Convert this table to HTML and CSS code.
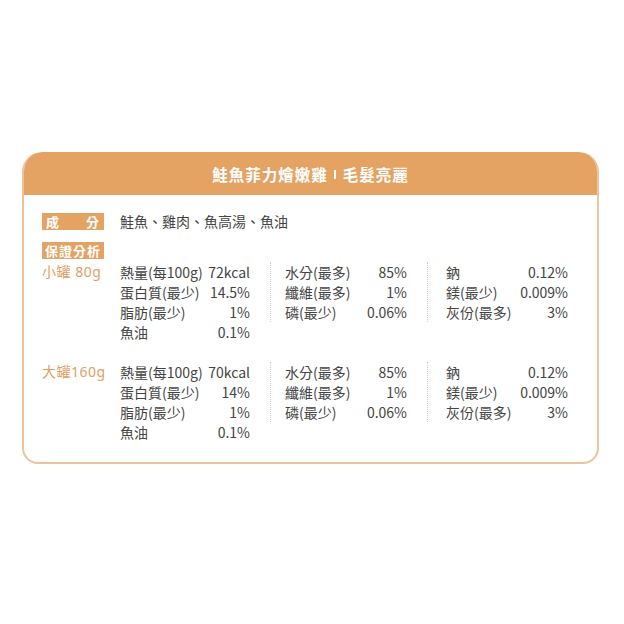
FILE: index.html
```html
<!DOCTYPE html>
<html lang="zh-Hant">
<head>
<meta charset="utf-8">
<link rel="stylesheet" href="styles.css">
</head>
<body>
<div class="card">
  <div class="head">鮭魚菲力燴嫩雞<span class="bar"></span>毛髮亮麗</div>
  <div class="body">
    <div class="row ingr">
      <span class="tag spread"><span>成</span><span>分</span></span>
      <span class="ingr-text">鮭魚、雞肉、魚高湯、魚油</span>
    </div>
    <div class="row"><span class="tag">保證分析</span></div>
    <div class="prod">
      <div class="pname">小罐 80g</div>
      <div class="col c1">
        <span>熱量(每100g)</span><span class="v">72kcal</span>
        <span>蛋白質(最少)</span><span class="v">14.5%</span>
        <span>脂肪(最少)</span><span class="v">1%</span>
        <span>魚油</span><span class="v">0.1%</span>
      </div>
      <div class="col c2">
        <span>水分(最多)</span><span class="v">85%</span>
        <span>纖維(最多)</span><span class="v">1%</span>
        <span>磷(最少)</span><span class="v">0.06%</span>
      </div>
      <div class="col c3">
        <span>鈉</span><span class="v">0.12%</span>
        <span>鎂(最少)</span><span class="v">0.009%</span>
        <span>灰份(最多)</span><span class="v">3%</span>
      </div>
    </div>
    <div class="prod second">
      <div class="pname">大罐160g</div>
      <div class="col c1">
        <span>熱量(每100g)</span><span class="v">70kcal</span>
        <span>蛋白質(最少)</span><span class="v">14%</span>
        <span>脂肪(最少)</span><span class="v">1%</span>
        <span>魚油</span><span class="v">0.1%</span>
      </div>
      <div class="col c2">
        <span>水分(最多)</span><span class="v">85%</span>
        <span>纖維(最多)</span><span class="v">1%</span>
        <span>磷(最少)</span><span class="v">0.06%</span>
      </div>
      <div class="col c3">
        <span>鈉</span><span class="v">0.12%</span>
        <span>鎂(最少)</span><span class="v">0.009%</span>
        <span>灰份(最多)</span><span class="v">3%</span>
      </div>
    </div>
  </div>
</div>
</body>
</html>
```
FILE: styles.css
```css
html, body {
  margin: 0;
  padding: 0;
  background: #fff;
}
body {
  font-family: "Noto Sans CJK TC", "Noto Sans", sans-serif;
  color: #444;
  padding: 152px 0 0 22px;
}
.card {
  width: 573px;
  border: 2px solid #ecc49c;
  border-top: none;
  border-radius: 20px 20px 16px 16px;
  overflow: hidden;
}
.head {
  height: 43px;
  background: #e4a263;
  color: #fff;
  font-weight: 700;
  font-size: 15.5px;
  display: flex;
  align-items: center;
  justify-content: center;
  letter-spacing: 1px;
  margin: 0 -2px;
  border-radius: 20px 20px 0 0;
}
.bar {
  display: inline-block;
  width: 2px;
  height: 9px;
  background: #fff;
  margin: 2px 7px 0 6px;
}
.body {
  padding: 16px 0 20px 18px;
}
.row {
  display: flex;
  align-items: center;
  height: 20px;
}
.ingr {
  margin-bottom: 9px;
}
.tag {
  width: 62px;
  height: 17px;
  box-sizing: border-box;
  background: #e4a263;
  color: #fff;
  font-weight: 700;
  font-size: 13px;
  line-height: 17px;
  padding: 0 2px;
  letter-spacing: 1px;
  display: flex;
  align-items: center;
  justify-content: center;
}
.tag.spread {
  justify-content: space-between;
  padding: 0 4px;
}
.ingr-text {
  margin-left: 16px;
  font-size: 14px;
}
.prod {
  display: flex;
  align-items: flex-start;
  font-size: 14px;
  line-height: 20px;
  margin-top: 2px;
}
.prod.second {
  margin-top: 20px;
}
.pname {
  width: 62px;
  color: #e0a064;
  font-family: "Noto Sans", "Noto Sans CJK TC", sans-serif;
  font-size: 14px;
  letter-spacing: 0.5px;
  margin-right: 16px;
  white-space: nowrap;
}
.col {
  display: grid;
  grid-template-columns: auto auto;
  justify-content: space-between;
}
.col .v {
  text-align: right;
}
.c1 {
  width: 130px;
  margin-right: 20px;
}
.c2 {
  width: 122px;
  border-left: 1px dotted #cfcfcf;
  padding-left: 14px;
  margin-right: 20px;
}
.c3 {
  width: 122px;
  border-left: 1px dotted #cfcfcf;
  padding-left: 18px;
}
```
